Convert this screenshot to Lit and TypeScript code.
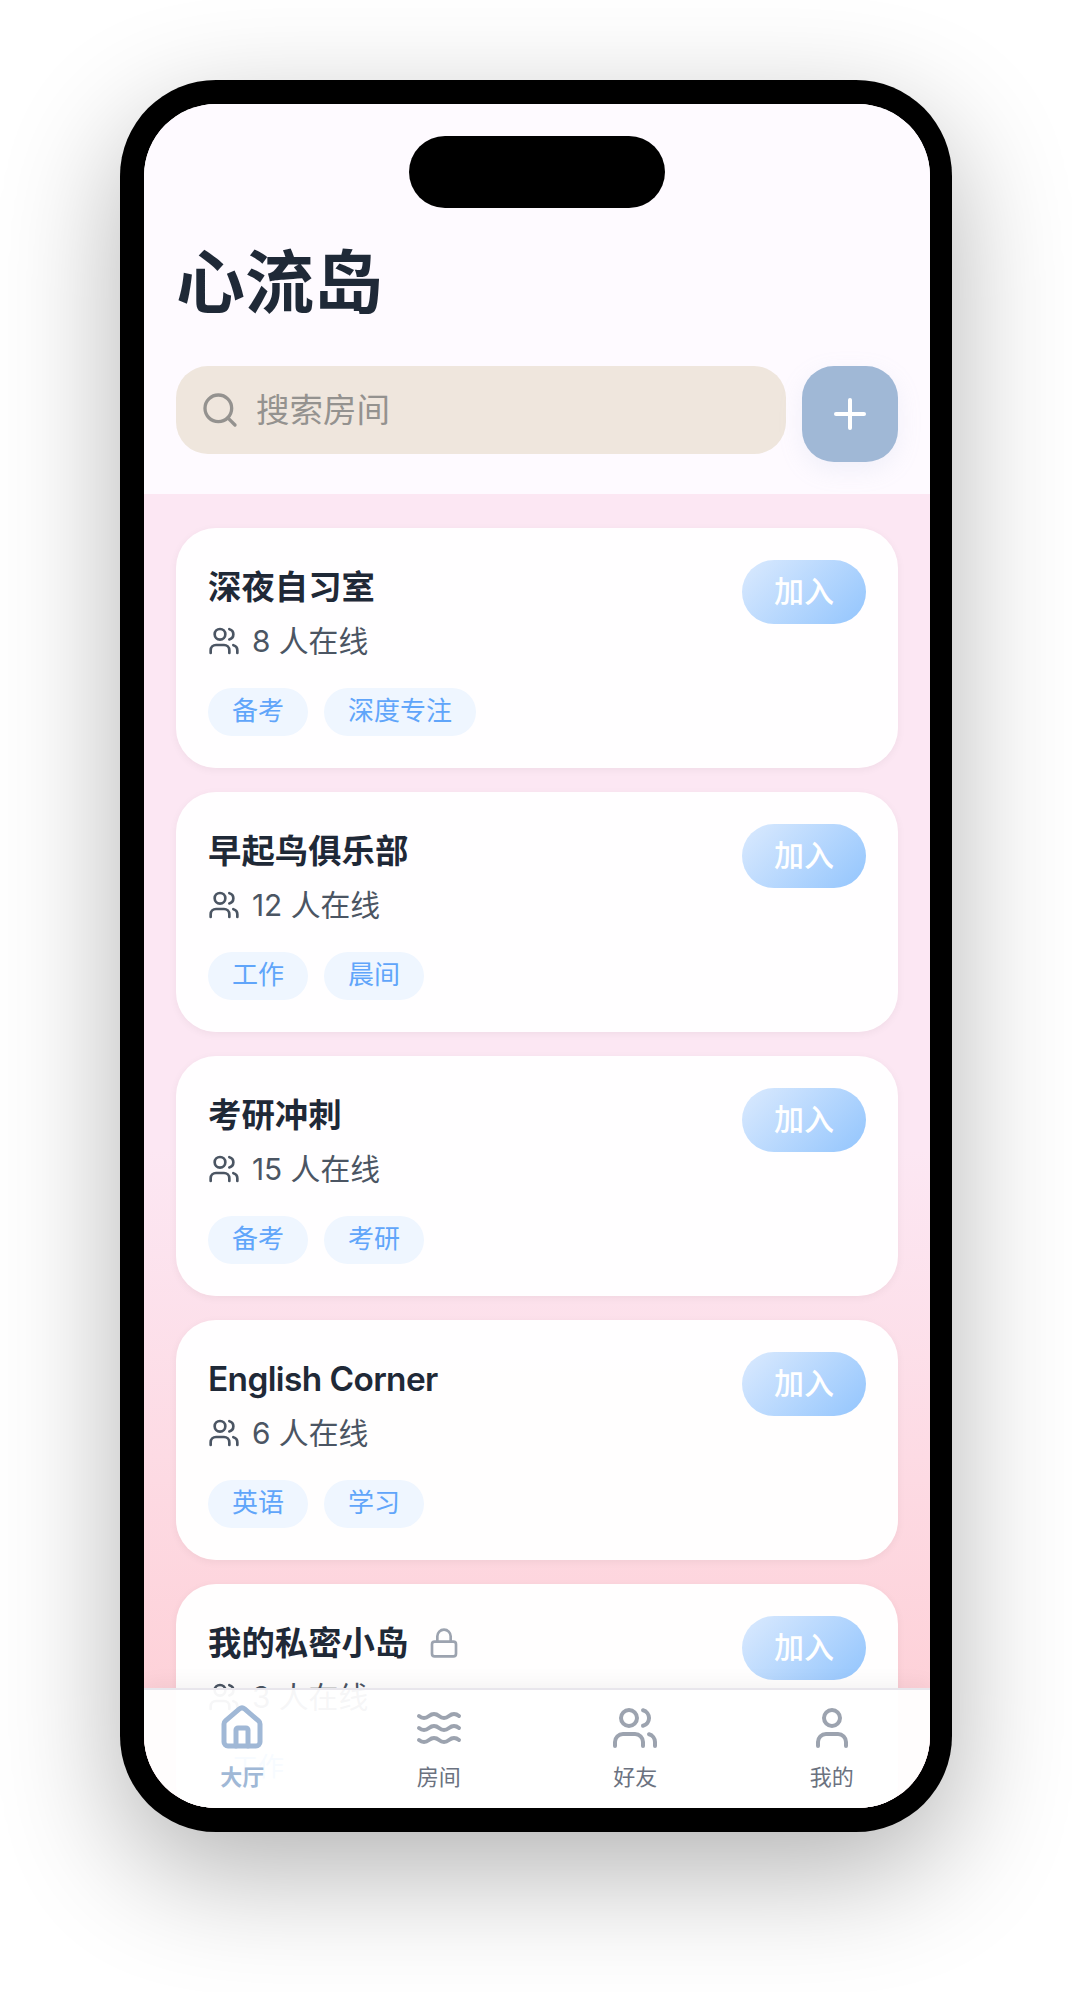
import { LitElement, html, css, svg } from "lit";
import { customElement } from "lit/decorators.js";

const ic = {
  search: svg`<circle cx="11" cy="11" r="8"/><path d="m21 21-4.3-4.3"/>`,
  plus: svg`<path d="M5 12h14"/><path d="M12 5v14"/>`,
  users: svg`<path d="M16 21v-2a4 4 0 0 0-4-4H6a4 4 0 0 0-4 4v2"/><circle cx="9" cy="7" r="4"/><path d="M22 21v-2a4 4 0 0 0-3-3.87"/><path d="M16 3.13a4 4 0 0 1 0 7.75"/>`,
  user: svg`<path d="M19 21v-2a4 4 0 0 0-4-4H9a4 4 0 0 0-4 4v2"/><circle cx="12" cy="7" r="4"/>`,
  lock: svg`<rect x="3" y="11" width="18" height="11" rx="2" ry="2"/><path d="M7 11V7a5 5 0 0 1 10 0v4"/>`,
  home: svg`<path d="M15 21v-8a1 1 0 0 0-1-1h-4a1 1 0 0 0-1 1v8"/><path d="M3 10a2 2 0 0 1 .709-1.528l7-5.999a2 2 0 0 1 2.582 0l7 5.999A2 2 0 0 1 21 10v9a2 2 0 0 1-2 2H5a2 2 0 0 1-2-2z"/>`,
  waves: svg`<path d="M2 6c.6.5 1.2 1 2.5 1C7 7 7 5 9.5 5c2.6 0 2.4 2 5 2 2.5 0 2.5-2 5-2 1.3 0 1.9.5 2.5 1"/><path d="M2 12c.6.5 1.2 1 2.5 1 2.5 0 2.5-2 5-2 2.6 0 2.4 2 5 2 2.5 0 2.5-2 5-2 1.3 0 1.9.5 2.5 1"/><path d="M2 18c.6.5 1.2 1 2.5 1 2.5 0 2.5-2 5-2 2.6 0 2.4 2 5 2 2.5 0 2.5-2 5-2 1.3 0 1.9.5 2.5 1"/>`,
};
const icon = (p: unknown, cls: string) =>
  html`<svg class=${cls} viewBox="0 0 24 24" fill="none" stroke="currentColor" stroke-width="2" stroke-linecap="round" stroke-linejoin="round">${p}</svg>`;

const rooms = [
  { name: "深夜自习室", n: 8, tags: ["备考", "深度专注"] },
  { name: "早起鸟俱乐部", n: 12, tags: ["工作", "晨间"] },
  { name: "考研冲刺", n: 15, tags: ["备考", "考研"] },
  { name: "English Corner", n: 6, tags: ["英语", "学习"], latin: true },
  { name: "我的私密小岛", n: 3, tags: ["工作"], locked: true },
];
const tabs = [
  { label: "大厅", p: ic.home, active: true },
  { label: "房间", p: ic.waves },
  { label: "好友", p: ic.users },
  { label: "我的", p: ic.user },
];

@customElement("app-root")
export class AppRoot extends LitElement {
  static styles = css`
    :host {
      display: block;
      height: 1992px;
      background: #fff;
      overflow: hidden;
      font-family: Inter, "Noto Sans CJK SC", sans-serif;
    }
    .frame {
      box-sizing: border-box;
      width: 832px;
      height: 1752px;
      margin: 80px auto 0;
      padding: 24px 22px 24px 24px;
      background: #000;
      border-radius: 96px;
      box-shadow: 0 40px 120px rgba(0, 0, 0, 0.3);
    }
    .screen {
      position: relative;
      width: 786px;
      height: 1704px;
      border-radius: 72px;
      overflow: hidden;
      display: flex;
      flex-direction: column;
      background: #fff;
    }
    .island {
      position: absolute;
      top: 32px;
      left: 265px;
      width: 256px;
      height: 72px;
      border-radius: 36px;
      background: #000;
      z-index: 3;
    }
    header {
      flex: none;
      box-sizing: border-box;
      height: 390px;
      padding: 128px 32px 0;
      background: #fefaff;
    }
    h1 {
      margin: 0 0 32px;
      font-size: 69px;
      line-height: 102px;
      font-weight: 700;
      color: #1f2937;
    }
    .row {
      display: flex;
      gap: 16px;
      align-items: flex-start;
    }
    .search {
      flex: 1;
      height: 88px;
      box-sizing: border-box;
      padding: 0 24px;
      display: flex;
      align-items: center;
      gap: 16px;
      background: #efe6dd;
      border-radius: 32px;
      font-size: 33.5px;
      line-height: 46px;
      color: #94928f;
    }
    .i-search { width: 40px; height: 40px; }
    .add {
      width: 96px;
      height: 96px;
      display: flex;
      align-items: center;
      justify-content: center;
      background: #a0b8d6;
      border-radius: 32px;
      color: #fff;
      box-shadow: 0 8px 24px rgba(160, 184, 214, 0.15);
    }
    .i-plus { width: 48px; height: 48px; }
    .list {
      flex: 1;
      min-height: 0;
      overflow: hidden;
      box-sizing: border-box;
      padding: 34px 32px 0;
      display: flex;
      flex-direction: column;
      gap: 24px;
      background: linear-gradient(180deg, #fce7f3 0%, #fce7f3 50%, #fecdd3 100%);
    }
    .card {
      flex: none;
      box-sizing: border-box;
      height: 240px;
      padding: 32px;
      background: rgba(255, 255, 255, 0.96);
      border-radius: 40px;
      box-shadow: 0 2px 8px rgba(0, 0, 0, 0.05);
      display: grid;
      grid-template-columns: 1fr auto;
    }
    .title {
      display: flex;
      align-items: center;
      gap: 16px;
      font-size: 33.4px;
      line-height: 50px;
      font-weight: 600;
      color: #1f2937;
      padding-top: 2px;
    }
    .title.latin { letter-spacing: -0.6px; }
    .i-lock { width: 32px; height: 32px; margin-left: 4px; color: #9ca3af; }
    .meta {
      display: flex;
      align-items: center;
      gap: 12px;
      margin-top: 7px;
      font-size: 29.8px;
      line-height: 44px;
      color: #4b5563;
    }
    .i-users { width: 32px; height: 32px; }
    .tags {
      display: flex;
      gap: 16px;
      margin-top: 25px;
    }
    .tag {
      height: 48px;
      line-height: 46px;
      padding: 0 24px;
      border-radius: 24px;
      font-size: 26px;
      background: #eff6ff;
      color: #60a5fa;
    }
    .join {
      width: 124px;
      height: 64px;
      line-height: 62px;
      text-align: center;
      border-radius: 32px;
      font-size: 30px;
      font-weight: 500;
      color: #fff;
      background: linear-gradient(135deg, #dbeafe, #93c5fd);
    }
    nav {
      position: absolute;
      left: 0;
      right: 0;
      bottom: 0;
      height: 120px;
      box-sizing: border-box;
      border-top: 2px solid #e8e6ec;
      background: rgba(255, 255, 255, 0.95);
      box-shadow: 0 -4px 20px rgba(0, 0, 0, 0.05);
      display: grid;
      grid-template-columns: repeat(4, 1fr);
      z-index: 2;
    }
    .tab {
      display: flex;
      flex-direction: column;
      align-items: center;
      padding-top: 14px;
      font-size: 22px;
      line-height: 36px;
      color: #6b7280;
    }
    .tab svg { width: 48px; height: 48px; color: #9ca3af; margin-bottom: 7px; }
    .tab.active { color: #a0b8d6; font-weight: 600; }
    .tab.active svg { color: #a0b8d6; stroke-width: 2.5; }
  `;

  render() {
    return html`
      <div class="frame">
        <div class="screen">
          <div class="island"></div>
          <header>
            <h1>心流岛</h1>
            <div class="row">
              <div class="search">${icon(ic.search, "i-search")}<span>搜索房间</span></div>
              <div class="add">${icon(ic.plus, "i-plus")}</div>
            </div>
          </header>
          <div class="list">
            ${rooms.map(
              (r) => html`<div class="card">
                <div>
                  <div class="title ${r.latin ? "latin" : ""}">${r.name}${r.locked ? icon(ic.lock, "i-lock") : ""}</div>
                  <div class="meta">${icon(ic.users, "i-users")}<span>${r.n} 人在线</span></div>
                  <div class="tags">${r.tags.map((t) => html`<span class="tag">${t}</span>`)}</div>
                </div>
                <div class="join">加入</div>
              </div>`
            )}
          </div>
          <nav>
            ${tabs.map(
              (t) => html`<div class="tab ${t.active ? "active" : ""}">${icon(t.p, "")}<span>${t.label}</span></div>`
            )}
          </nav>
        </div>
      </div>
    `;
  }
}
